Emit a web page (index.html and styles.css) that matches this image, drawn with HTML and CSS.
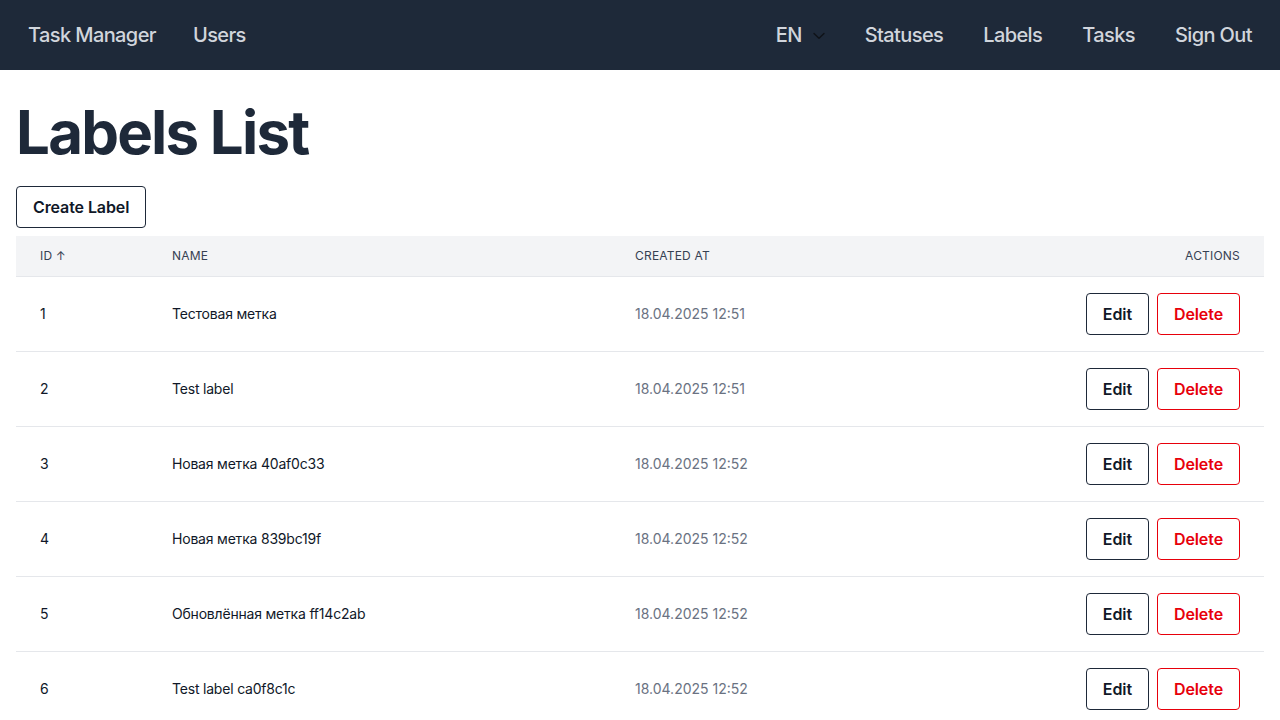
FILE: index.html
```html
<!DOCTYPE html>
<html lang="en">
<head>
<meta charset="utf-8">
<title>Labels List</title>
<link rel="stylesheet" href="styles.css">
</head>
<body>
<nav class="nav">
  <div class="nav-left">
    <a class="nav-link" href="#">Task Manager</a>
    <a class="nav-link" href="#">Users</a>
  </div>
  <div class="nav-right">
    <span class="nav-link lang">EN
      <svg class="chev" width="12" height="8" viewBox="0 0 12 8"><path d="M1 1.5 L6 6.3 L11 1.5" fill="none" stroke="#0f1218" stroke-width="1.4" stroke-linecap="round" stroke-linejoin="round"/></svg>
    </span>
    <a class="nav-link" href="#">Statuses</a>
    <a class="nav-link" href="#">Labels</a>
    <a class="nav-link" href="#">Tasks</a>
    <a class="nav-link" href="#">Sign Out</a>
  </div>
</nav>
<main class="main">
  <h1 class="title">Labels List</h1>
  <a class="btn btn-dark create" href="#">Create Label</a>
  <table class="table">
    <colgroup>
      <col class="c-id"><col class="c-name"><col class="c-date"><col class="c-act">
    </colgroup>
    <thead>
      <tr>
        <th>ID ↑</th>
        <th>Name</th>
        <th>Created At</th>
        <th class="right">Actions</th>
      </tr>
    </thead>
    <tbody>
      <tr><td>1</td><td>Тестовая метка</td><td class="date">18.04.2025 12:51</td><td class="right"><div class="acts"><a class="btn btn-dark" href="#">Edit</a><a class="btn btn-red" href="#">Delete</a></div></td></tr>
      <tr><td>2</td><td>Test label</td><td class="date">18.04.2025 12:51</td><td class="right"><div class="acts"><a class="btn btn-dark" href="#">Edit</a><a class="btn btn-red" href="#">Delete</a></div></td></tr>
      <tr><td>3</td><td>Новая метка 40af0c33</td><td class="date">18.04.2025 12:52</td><td class="right"><div class="acts"><a class="btn btn-dark" href="#">Edit</a><a class="btn btn-red" href="#">Delete</a></div></td></tr>
      <tr><td>4</td><td>Новая метка 839bc19f</td><td class="date">18.04.2025 12:52</td><td class="right"><div class="acts"><a class="btn btn-dark" href="#">Edit</a><a class="btn btn-red" href="#">Delete</a></div></td></tr>
      <tr><td>5</td><td>Обновлённая метка ff14c2ab</td><td class="date">18.04.2025 12:52</td><td class="right"><div class="acts"><a class="btn btn-dark" href="#">Edit</a><a class="btn btn-red" href="#">Delete</a></div></td></tr>
      <tr><td>6</td><td>Test label ca0f8c1c</td><td class="date">18.04.2025 12:52</td><td class="right"><div class="acts"><a class="btn btn-dark" href="#">Edit</a><a class="btn btn-red" href="#">Delete</a></div></td></tr>
    </tbody>
  </table>
</main>
</body>
</html>
```
FILE: styles.css
```css
* { box-sizing: border-box; }
html, body { margin: 0; padding: 0; }
body {
  font-family: Inter, "Noto Sans", "Liberation Sans", sans-serif;
  background: #ffffff;
  color: #111827;
}
a { text-decoration: none; color: inherit; }

.nav {
  height: 70px;
  background: #1e2939;
  display: flex;
  align-items: center;
  justify-content: space-between;
  padding: 0 28px;
}
.nav-left, .nav-right {
  display: flex;
  align-items: center;
  gap: 40px;
}
.nav-left { gap: 37px; }
.nav-link {
  color: #d1d5dc;
  font-size: 20px;
  line-height: 28px;
  font-weight: 500;
  letter-spacing: -0.6px;
}
.lang {
  display: flex;
  align-items: center;
  gap: 11px;
}
.chev { display: block; margin-top: 1px; }

.main {
  padding: 0 16px;
}
.title {
  margin: 32px 0 24px;
  font-size: 60px;
  line-height: 60px;
  font-weight: 700;
  color: #1e2939;
  letter-spacing: -1.8px;
}
.btn {
  display: inline-block;
  padding: 8px 16px;
  font-size: 16px;
  line-height: 24px;
  font-weight: 600;
  letter-spacing: -0.1px;
  border-radius: 4px;
  border: 1px solid #1e2939;
  background: #fff;
}
.btn-dark { color: #101828; border-color: #1e2939; }
.btn-red { color: #e7000b; border-color: #e7000b; }
.create { margin-bottom: 8px; }

.table {
  width: 100%;
  border-collapse: collapse;
  table-layout: fixed;
}
.c-id { width: 132px; }
.c-name { width: 463px; }
.c-date { width: 400px; }
.table th {
  background: #f3f4f6;
  font-size: 12px;
  line-height: 16px;
  font-weight: 400;
  text-transform: uppercase;
  letter-spacing: 0.2px;
  color: #364153;
  text-align: left;
  padding: 12px 24px;
  border-bottom: 1px solid #e5e7eb;
}
.table td {
  font-size: 14px;
  line-height: 20px;
  padding: 16px 24px;
  color: #101828;
  letter-spacing: -0.2px;
  border-bottom: 1px solid #e5e7eb;
  vertical-align: middle;
}
.table td.date { color: #6a7282; letter-spacing: 0; }
.table .right { text-align: right; }
.acts {
  display: flex;
  justify-content: flex-end;
  gap: 8px;
}
```
